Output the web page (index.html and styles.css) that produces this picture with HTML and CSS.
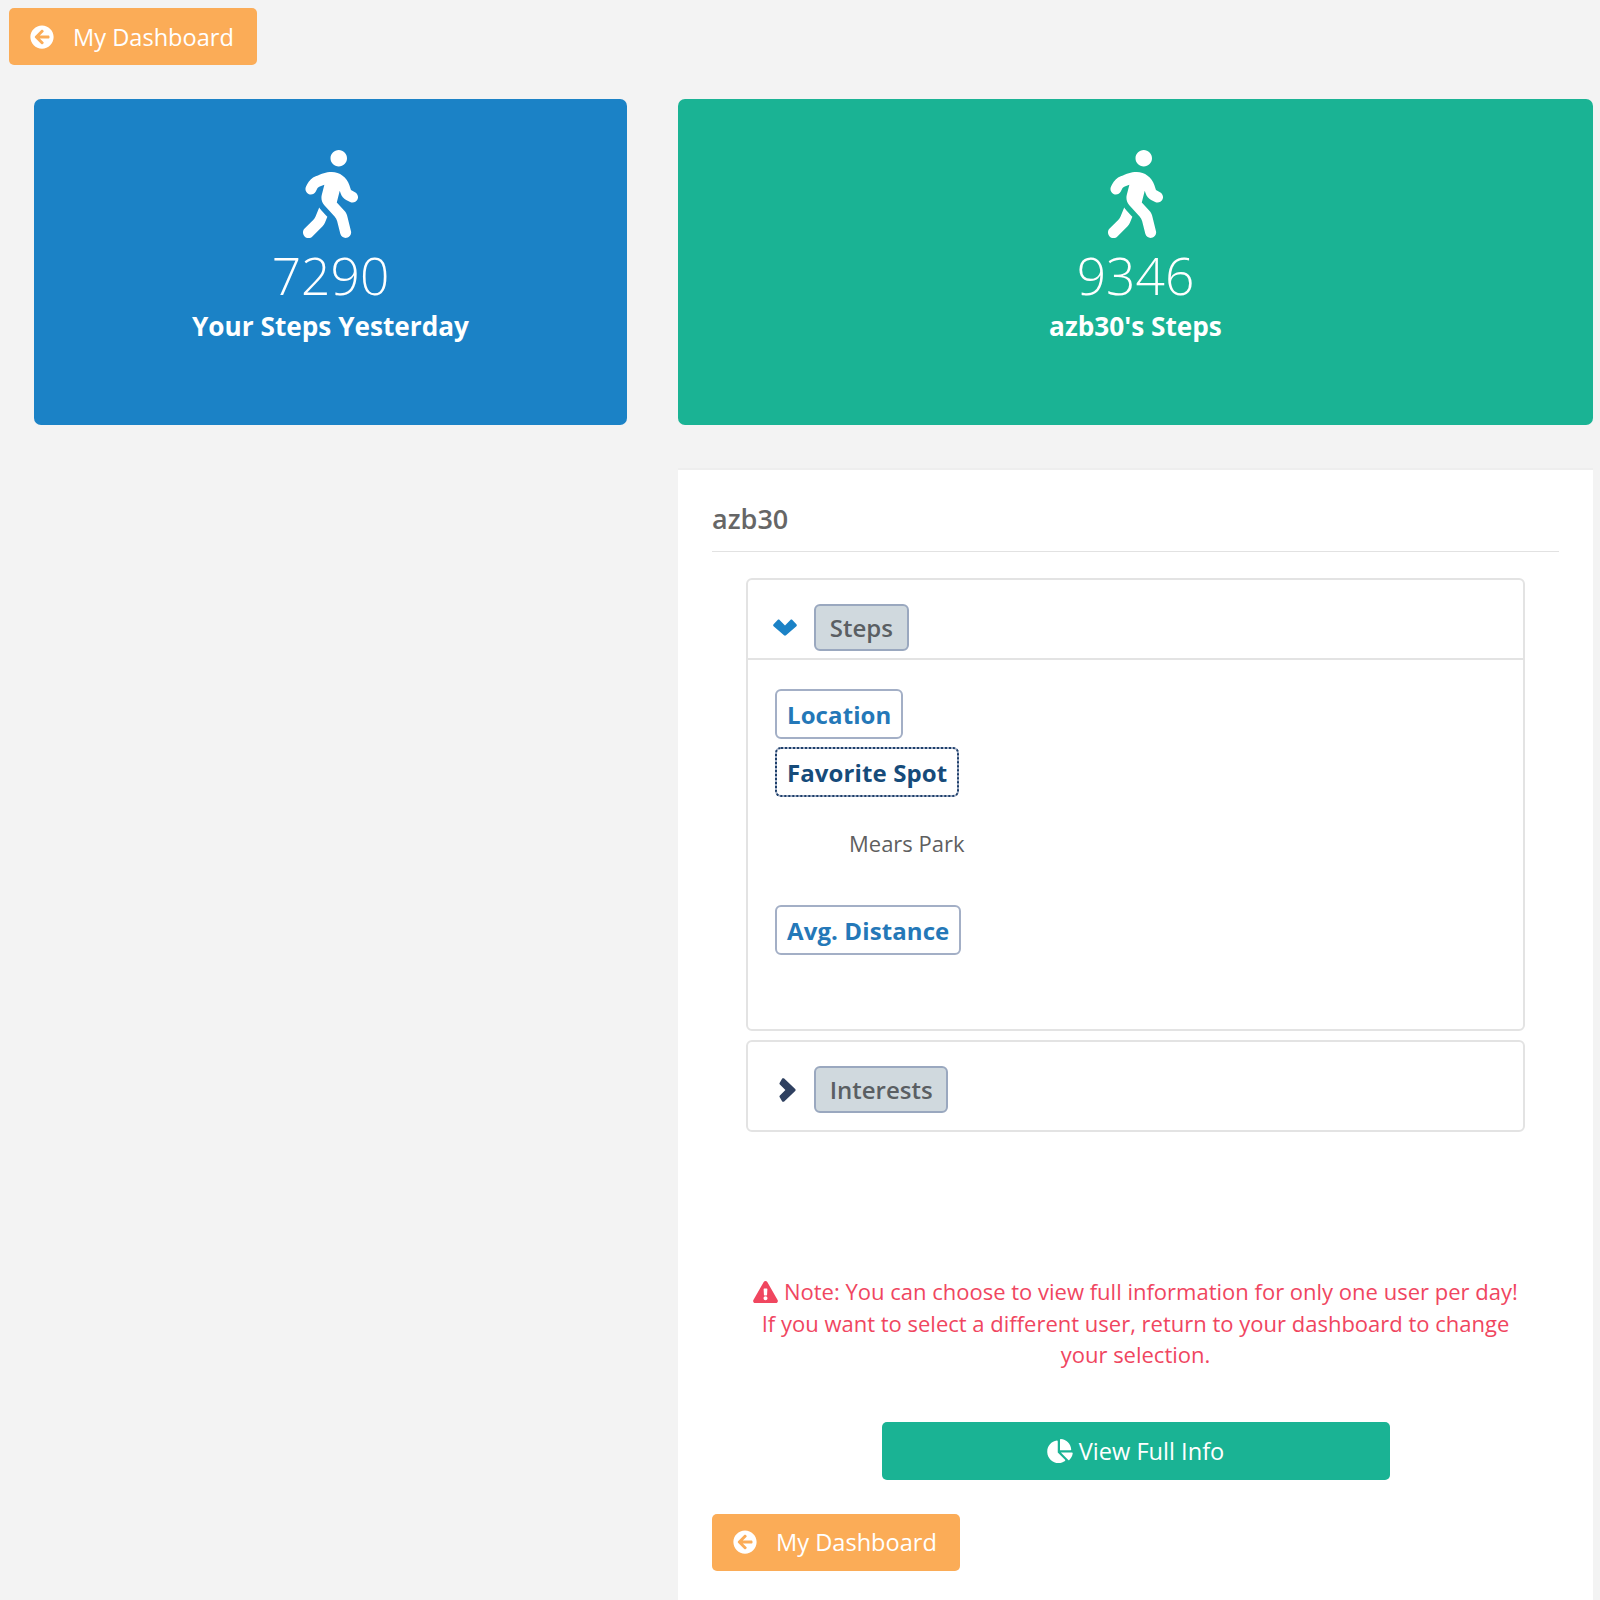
FILE: index.html
```html
<!DOCTYPE html>
<html lang="en">
<head>
<meta charset="utf-8">
<title>Steps comparison</title>
<link rel="stylesheet" href="styles.css">
</head>
<body>
<svg class="defs" aria-hidden="true">
  <symbol id="i-walk" viewBox="0 0 320 512"><path d="M208 96c26.5 0 48-21.5 48-48S234.5 0 208 0s-48 21.5-48 48 21.5 48 48 48zm94.5 149.1l-23.3-11.8-9.7-29.4c-14.7-44.6-55.7-75.8-102.2-75.9-36-.1-55.9 10.1-93.3 25.2-21.6 8.7-39.3 25.2-49.7 46.2L17.6 213c-7.8 15.8-1.5 35 14.2 42.9 15.6 7.9 34.6 1.5 42.5-14.3L81 228c3.5-7 9.3-12.5 16.5-15.4l26.8-10.8-15.2 60.7c-5.2 20.8.4 42.9 14.9 58.8l59.9 65.4c7.2 7.9 12.3 17.4 14.9 27.7l18.3 73.3c4.3 17.1 21.7 27.6 38.8 23.3 17.1-4.3 27.6-21.7 23.3-38.8l-22.2-89c-2.6-10.3-7.7-19.9-14.9-27.7l-45.5-49.7 17.2-68.7 5.5 16.5c5.3 16.1 16.7 29.4 31.7 37l23.3 11.8c15.6 7.9 34.6 1.5 42.5-14.3 7.7-15.7 1.4-35.1-14.3-43zM73.6 385.8c-3.2 8.1-8 15.4-14.2 21.5l-50 50.1c-12.5 12.5-12.5 32.8 0 45.3s32.7 12.5 45.2 0l59.4-59.4c6.1-6.1 10.9-13.4 14.2-21.5l13.5-33.8c-55.3-60.3-38.7-41.8-47.4-53.7l-20.7 51.5z"/></symbol>
  <symbol id="i-back" viewBox="0 0 512 512"><path d="M256 504C119 504 8 393 8 256S119 8 256 8s248 111 248 248-111 248-248 248zm28.9-143.6L209.4 288H392c13.3 0 24-10.7 24-24v-16c0-13.3-10.7-24-24-24H209.4l75.5-72.4c9.7-9.3 9.9-24.8.4-34.3l-11-10.9c-9.4-9.4-24.6-9.4-33.9 0L107.7 239c-9.4 9.4-9.4 24.6 0 33.9l132.7 132.7c9.4 9.4 24.6 9.4 33.9 0l11-10.9c9.5-9.5 9.3-25-.4-34.3z"/></symbol>
  <symbol id="i-down" viewBox="0 0 24 17"><path d="M.6 5.2 4.6.9C5.2.3 6 .3 6.6.9L12 6.4 17.4.9c.6-.6 1.4-.6 2 0l4 4.3c.6.6.6 1.4 0 2L13 16.2c-.6.6-1.4.6-2 0L.6 7.2C0 6.6 0 5.800.6 5.200z"/></symbol>
  <symbol id="i-right" viewBox="0 0 17 24"><path d="M5.200.6 16.200 11c.6.6.6 1.400 0 2L5.200 23.400c-.6.600-1.400.600-2 0L.9 19.400c-.6-.6-.6-1.400 0-2L6.400 12 .9 6.600c-.6-.6-.6-1.400 0-2L3.200.6c.6-.6 1.400-.6 2 0z"/></symbol>
  <symbol id="i-warn" viewBox="0 0 576 512"><path d="M569.517 440.013C587.975 472.007 564.806 512 527.94 512H48.054c-36.937 0-59.999-40.055-41.577-71.987L246.423 23.985c18.467-32.009 64.72-31.951 83.154 0l239.94 416.028zM288 354c-25.405 0-46 20.595-46 46s20.595 46 46 46 46-20.595 46-46-20.595-46-46-46zm-43.673-165.346l7.418 136c.347 6.364 5.609 11.346 11.982 11.346h48.546c6.373 0 11.635-4.982 11.982-11.346l7.418-136c.375-6.874-5.098-12.654-11.982-12.654h-63.383c-6.884 0-12.356 5.78-11.981 12.654z"/></symbol>
  <symbol id="i-pie" viewBox="0 0 544 512"><path d="M527.79 288H290.5l158.03 158.03c6.04 6.04 15.98 6.53 22.19.68 38.7-36.46 65.32-85.61 73.13-140.86 1.34-9.46-6.51-17.85-16.06-17.85zm-15.83-64.8C503.72 103.74 408.26 8.28 288.8.04 279.68-.59 272 7.1 272 16.24V240h223.77c9.14 0 16.82-7.68 16.19-16.8zM224 288V50.71c0-9.55-8.39-17.4-17.84-16.06C86.99 51.49-4.1 155.6.14 280.37 4.5 408.51 114.83 513.59 243.03 511.98c50.4-.63 96.97-16.87 135.26-44.03 7.9-5.6 8.42-17.23 1.57-24.08L224 288z"/></symbol>
</svg>

<div class="topbar">
  <a class="btn-back" href="#"><svg class="icon-back"><use href="#i-back"/></svg><span>My Dashboard</span></a>
</div>

<main class="columns">
  <section class="col-left">
    <div class="stat stat-blue">
      <svg class="icon-walk"><use href="#i-walk"/></svg>
      <div class="stat-num">7290</div>
      <div class="stat-label">Your Steps Yesterday</div>
    </div>
  </section>

  <section class="col-right">
    <div class="stat stat-green">
      <svg class="icon-walk"><use href="#i-walk"/></svg>
      <div class="stat-num">9346</div>
      <div class="stat-label">azb30's Steps</div>
    </div>

    <div class="panel">
      <h2 class="panel-title">azb30</h2>
      <div class="accordion">
        <div class="acc-item">
          <div class="acc-head acc-head-open">
            <svg class="chev-down"><use href="#i-down"/></svg>
            <span class="pill">Steps</span>
          </div>
          <div class="acc-body">
            <div class="field-row"><button class="field" type="button">Location</button></div>
            <div class="field-row"><button class="field field-focus" type="button">Favorite Spot</button></div>
            <p class="field-value">Mears Park</p>
            <div class="field-row"><button class="field" type="button">Avg. Distance</button></div>
          </div>
        </div>
        <div class="acc-item">
          <div class="acc-head">
            <svg class="chev-right"><use href="#i-right"/></svg>
            <span class="pill">Interests</span>
          </div>
        </div>
      </div>

      <p class="note"><svg class="icon-warn"><use href="#i-warn"/></svg> Note: You can choose to view full information for only one user per day! If you want to select a different user, return to your dashboard to change your selection.</p>

      <div class="cta-wrap">
        <a class="btn-cta" href="#"><svg class="icon-pie"><use href="#i-pie"/></svg><span>View Full Info</span></a>
      </div>

      <a class="btn-back" href="#"><svg class="icon-back"><use href="#i-back"/></svg><span>My Dashboard</span></a>
    </div>
  </section>
</main>
</body>
</html>
```
FILE: styles.css
```css
* { box-sizing: border-box; }
html, body { margin: 0; padding: 0; }
body {
  background: #f3f3f3;
  font-family: "Open Sans", "Noto Sans", sans-serif;
  color: #5f5f5f;
}
.defs { display: none; }

.topbar { padding: 8px 9px 34px; }

.btn-back {
  display: inline-flex;
  align-items: center;
  width: 248px;
  height: 57px;
  padding-left: 21px;
  background: #fbac57;
  border-radius: 5px;
  color: #fff;
  font-size: 23.6px;
  text-decoration: none;
}
.icon-back { width: 24px; height: 24px; fill: #fff; margin-right: 19px; }

.columns {
  display: grid;
  grid-template-columns: 593px 915px;
  column-gap: 51px;
  padding-left: 34px;
  align-items: start;
}

.stat {
  height: 326px;
  border-radius: 7px;
  color: #fff;
  text-align: center;
  padding-top: 51px;
}
.stat-blue { background: #1b82c6; }
.stat-green { background: #1ab394; }
.icon-walk { display: block; width: 55px; height: 88px; margin: 0 auto; fill: #fff; }
.stat-num { font-size: 51.5px; font-weight: 300; line-height: 74px; }
.stat-label { margin-top: 1px; font-size: 26.2px; font-weight: 700; line-height: 27px; }

.panel {
  margin-top: 43px;
  height: 1132px;
  background: #fff;
  border-top: 2px solid #eeeeee;
  padding: 0 34px;
}
.panel-title {
  margin: 0;
  height: 82px;
  padding-top: 31px;
  font-size: 27px;
  line-height: 36px;
  font-weight: 600;
  color: #666;
  border-bottom: 1px solid #e2e2e2;
}
.accordion {
  margin: 26px 34px 0;
  display: flex;
  flex-direction: column;
  gap: 9px;
}
.acc-item { border: 2px solid #e3e3e3; border-radius: 6px; }
.acc-head { display: flex; align-items: center; height: 88px; padding: 7px 0 0 25px; }
.acc-head-open { height: 80px; padding-top: 16px; border-bottom: 2px solid #e3e3e3; }
.chev-down { width: 24px; height: 17px; fill: #1b82c6; margin-right: 17px; flex: none; }
.chev-right { width: 17px; height: 24px; fill: #2f4060; margin: 0 18px 0 6px; flex: none; }
.pill {
  display: inline-block;
  height: 47px;
  padding: 0 13.7px;
  background: #d0d9de;
  border: 2px solid #9aa8bf;
  border-radius: 6px;
  font-size: 24px;
  font-weight: 600;
  line-height: 44px;
  color: #5a5f63;
}
.acc-body { height: 369px; padding: 29px 27px 0; }
.field-row { margin-bottom: 8px; }
.field {
  display: block;
  height: 50px;
  padding: 0 10px;
  background: #fff;
  border: 2px solid #a3afc6;
  border-radius: 6px;
  font-family: inherit;
  font-size: 24px;
  font-weight: 700;
  letter-spacing: 0.1px;
  color: #2478b8;
}
.field-focus {
  outline: 2px dotted #1d3f6a;
  outline-offset: -2px;
  color: #164b7a;
}
.field-value {
  margin: 0 0 0 74px;
  height: 100px;
  padding-top: 23px;
  font-size: 22px;
  line-height: 30px;
  color: #5f5f5f;
}
.note {
  margin: 144px 34px 0;
  text-align: center;
  font-size: 22px;
  line-height: 31.6px;
  color: #f0465f;
}
.icon-warn { display: inline-block; width: 25px; height: 22px; fill: #f0465f; vertical-align: -3px; }
.cta-wrap { display: flex; justify-content: center; margin-top: 51px; margin-bottom: 34px; }
.btn-cta {
  display: flex;
  align-items: center;
  justify-content: center;
  width: 508px;
  height: 58px;
  background: #1ab394;
  border-radius: 5px;
  color: #fff;
  font-size: 23.6px;
  text-decoration: none;
}
.icon-pie { width: 26px; height: 24px; fill: #fff; margin-right: 6px; }
```
